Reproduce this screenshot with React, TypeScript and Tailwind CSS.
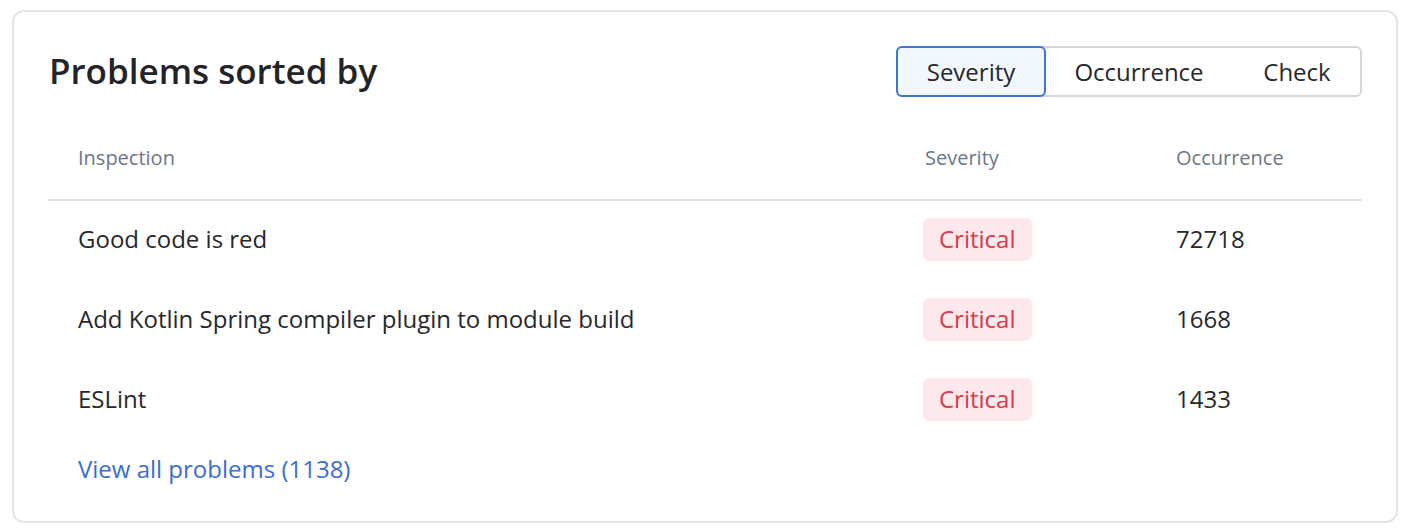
const rows = [
  { name: 'Good code is red', severity: 'Critical', count: 72718 },
  { name: 'Add Kotlin Spring compiler plugin to module build', severity: 'Critical', count: 1668 },
  { name: 'ESLint', severity: 'Critical', count: 1433 },
];

const sorts = [
  { label: 'Severity', width: 'w-[150px]' },
  { label: 'Occurrence', width: 'w-[190px]' },
  { label: 'Check', width: 'w-[126px]' },
];

const App = () => {
  return (
    <div className="bg-white pl-3 pt-[10px] font-['Open_Sans',sans-serif] text-[#27282c]">
      <div className="w-[1386px] h-[513px] rounded-[12px] border-2 border-[#e4e4e9] p-[34px]">
        <div className="flex items-center justify-between h-[51px]">
          <h1 className="text-[35px] font-semibold leading-none pl-[1px] -mt-[2px] text-[#232428]">Problems sorted by</h1>
          <div className="flex h-[51px] rounded-[6px] border-2 border-[#d6d7dc]">
            {sorts.map((s, i) => (
              <button
                key={s.label}
                className={
                  i === 0
                    ? `-m-[2px] h-[51px] ${s.width} rounded-[6px] border-2 border-[#3b77d9] bg-[#f3f7fe] text-[24px] text-[#27282c]`
                    : `h-full ${s.width} text-[24px] text-[#27282c]`
                }
              >
                {s.label}
              </button>
            ))}
          </div>
        </div>

        <div className="mt-[22px]">
          <div className="grid grid-cols-[845px_251px_1fr] h-[82px] pb-[2px] items-center border-b-2 border-[#e2e2e7] text-[20px] text-[#6c778a]">
            <div className="pl-[30px]">Inspection</div>
            <div className="pl-[32px]">Severity</div>
            <div className="pl-[32px]">Occurrence</div>
          </div>
          {rows.map((r) => (
            <div key={r.name} className="grid grid-cols-[845px_251px_1fr] h-[80px] pb-[4px] items-center text-[24px]">
              <div className="pl-[30px]">{r.name}</div>
              <div className="pl-[30px]">
                <span className="inline-flex items-center h-[43px] px-[16px] rounded-[6px] bg-[#fde9eb] text-[#d8394b]">
                  {r.severity}
                </span>
              </div>
              <div className="pl-[32px]">{r.count}</div>
            </div>
          ))}
          <a href="#" className="block mt-[10px] pl-[30px] text-[24px] text-[#3b6dd1]">
            View all problems (1138)
          </a>
        </div>
      </div>
    </div>
  );
};

export default App;
